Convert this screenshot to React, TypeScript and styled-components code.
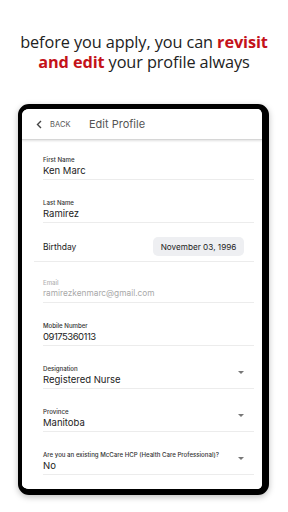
import React from "react";
import styled, { createGlobalStyle } from "styled-components";

const GlobalStyle = createGlobalStyle`
  html, body {
    margin: 0;
    padding: 0;
    background: #ffffff;
  }
`;

const Page = styled.div`
  width: 288px;
  height: 512px;
  overflow: hidden;
  display: flex;
  flex-direction: column;
  align-items: flex-start;
`;

const Headline = styled.h1`
  margin: 32px 0 0 0;
  width: 288px;
  text-align: center;
  font-family: "Open Sans", "Noto Sans", sans-serif;
  font-size: 16.3px;
  line-height: 20px;
  font-weight: 400;
  color: #222;
  letter-spacing: -0.1px;
  white-space: nowrap;
`;

const Accent = styled.span`
  color: #c4121a;
  font-weight: 700;
`;

const Device = styled.div`
  margin: 32px 0 0 18px;
  width: 251px;
  box-sizing: border-box;
  border-style: solid;
  border-color: #000;
  border-width: 5px 7px 6px 4px;
  border-radius: 11px;
  box-shadow: 0 2px 6px rgba(0, 0, 0, 0.25);
  overflow: hidden;
  background: #fff;
`;

const Screen = styled.div`
  background: #fff;
  border-radius: 5px;
  overflow: hidden;
  font-family: "Inter", "Liberation Sans", sans-serif;
`;

const Header = styled.div`
  height: 30px;
  display: flex;
  align-items: center;
  padding-left: 14px;
  border-bottom: 1px solid #d6d6d6;
  box-shadow: 0 1px 2px rgba(0, 0, 0, 0.12);
`;

const BackButton = styled.div`
  display: flex;
  align-items: center;
  gap: 8px;
  color: #555;
  font-size: 7.5px;
  letter-spacing: 0.1px;
  width: 53px;
`;

const Title = styled.div`
  font-size: 11px;
  color: #555;
`;

const Form = styled.div`
  padding: 15px 8px 14px 21px;
  display: flex;
  flex-direction: column;
`;

const Field = styled.div<{ top?: number }>`
  position: relative;
  padding-top: ${(p) => (p.top !== undefined ? p.top : 18)}px;
  padding-bottom: 2px;
  border-bottom: 1px solid #ececec;
`;

const Label = styled.div<{ muted?: boolean }>`
  font-size: 6.1px;
  line-height: 9px;
  font-weight: 500;
  color: ${(p) => (p.muted ? "#b3b3b3" : "#333")};
`;

const Value = styled.div<{ muted?: boolean; tight?: boolean }>`
  font-size: ${(p) => (p.muted ? 8.3 : 9.5)}px;
  line-height: 13px;
  letter-spacing: ${(p) => (p.tight ? "-0.5px" : "0")};
  color: ${(p) => (p.muted ? "#a8a8a8" : "#222")};
`;

const Caret = styled.div`
  position: absolute;
  right: 10px;
  bottom: 14px;
  width: 0;
  height: 0;
  border-left: 3px solid transparent;
  border-right: 3px solid transparent;
  border-top: 3px solid #777;
`;

const BirthdayRow = styled.div`
  margin-left: -9px;
  padding: 14px 10px 5px 9px;
  display: flex;
  align-items: center;
  justify-content: space-between;
  border-bottom: 1px solid #ececec;
`;

const BirthdayLabel = styled.div`
  font-size: 8.5px;
  color: #222;
`;

const DatePill = styled.div`
  height: 19px;
  width: 91px;
  box-sizing: border-box;
  display: flex;
  align-items: center;
  justify-content: center;
  border-radius: 5px;
  background: #eeeff2;
  font-size: 8.2px;
  color: #222;
`;

type FieldProps = {
  label: string;
  value: string;
  top?: number;
  muted?: boolean;
  tight?: boolean;
  dropdown?: boolean;
};

const FormField = ({ label, value, top, muted, tight, dropdown }: FieldProps) => (
  <Field top={top}>
    <Label muted={muted}>{label}</Label>
    <Value muted={muted} tight={tight}>
      {value}
    </Value>
    {dropdown && <Caret />}
  </Field>
);

export default function App() {
  return (
    <Page>
      <GlobalStyle />
      <Headline>
        before you apply, you can <Accent>revisit</Accent>
        <br />
        <Accent>and edit</Accent> your profile always
      </Headline>
      <Device>
        <Screen>
          <Header>
            <BackButton>
              <svg width="6" height="9" viewBox="0 0 6 9">
                <path
                  d="M5 1 L1.5 4.5 L5 8"
                  fill="none"
                  stroke="#444"
                  strokeWidth="1.4"
                />
              </svg>
              BACK
            </BackButton>
            <Title>Edit Profile</Title>
          </Header>
          <Form>
            <FormField label="First Name" value="Ken Marc" top={0} />
            <FormField label="Last Name" value="Ramirez" />
            <BirthdayRow>
              <BirthdayLabel>Birthday</BirthdayLabel>
              <DatePill>November 03, 1996</DatePill>
            </BirthdayRow>
            <FormField
              label="Email"
              value="ramirezkenmarc@gmail.com"
              top={16}
              muted
            />
            <FormField label="Mobile Number" value="09175360113" tight />
            <FormField label="Designation" value="Registered Nurse" dropdown />
            <FormField label="Province" value="Manitoba" dropdown />
            <FormField
              label="Are you an existing McCare HCP (Health Care Professional)?"
              value="No"
              dropdown
            />
          </Form>
        </Screen>
      </Device>
    </Page>
  );
}
